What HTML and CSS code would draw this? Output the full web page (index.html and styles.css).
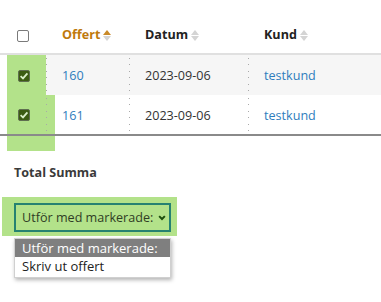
FILE: index.html
```html
<!DOCTYPE html>
<html lang="sv">
<head>
<meta charset="utf-8">
<title>Offerter</title>
<link rel="stylesheet" href="styles.css">
</head>
<body>
<div class="page">
  <div class="table-wrap">
    <div class="col-highlight"></div>
    <table class="grid">
      <thead>
        <tr>
          <th class="c-check"><span class="cb"></span></th>
          <th class="c-offert sorted">Offert<span class="sort up"><i></i><b></b></span></th>
          <th class="c-datum">Datum<span class="sort"><i></i><b></b></span></th>
          <th class="c-kund">Kund<span class="sort"><i></i><b></b></span></th>
        </tr>
      </thead>
      <tbody>
        <tr class="odd">
          <td class="c-check"><span class="cb checked"><svg viewBox="0 0 12 12" width="12" height="12"><path d="M2.6 6.2 L5 8.4 L9.4 3.4" fill="none" stroke="#d9eec7" stroke-width="1.8"/></svg></span></td>
          <td class="dot"><a class="lnk">160</a></td>
          <td class="dot">2023-09-06</td>
          <td class="dot"><a class="lnk">testkund</a></td>
        </tr>
        <tr>
          <td class="c-check"><span class="cb checked"><svg viewBox="0 0 12 12" width="12" height="12"><path d="M2.6 6.2 L5 8.4 L9.4 3.4" fill="none" stroke="#d9eec7" stroke-width="1.8"/></svg></span></td>
          <td class="dot"><a class="lnk">161</a></td>
          <td class="dot">2023-09-06</td>
          <td class="dot"><a class="lnk">testkund</a></td>
        </tr>
      </tbody>
    </table>
  </div>
  <div class="total">Total Summa</div>
  <div class="action-wrap">
    <div class="action">
      <div class="select">
        <span>Utför med markerade:</span>
        <svg class="chev" viewBox="0 0 10 8" width="8" height="6"><path d="M1.2 1.5 L5 5.4 L8.8 1.5" fill="none" stroke="#1d4d0c" stroke-width="2.6"/></svg>
      </div>
    </div>
    <div class="dropdown">
      <div class="opt active">Utför med markerade:</div>
      <div class="opt">Skriv ut offert</div>
    </div>
  </div>
</div>
</body>
</html>
```
FILE: styles.css
```css
* { box-sizing: border-box; }
html, body {
  margin: 0;
  padding: 0;
  background: #fff;
}
body {
  font-family: "Open Sans", "DejaVu Sans", sans-serif;
  font-size: 12.6px;
  color: #333;
}
.page {
  width: 381px;
  min-height: 302px;
}
.table-wrap {
  position: relative;
  z-index: 0;
}
.col-highlight {
  position: absolute;
  left: 7px;
  top: 54px;
  width: 48px;
  height: 97px;
  background: #b3e28a;
  z-index: -1;
}
.grid {
  width: 100%;
  border-collapse: collapse;
  table-layout: fixed;
}
.grid th {
  height: 54px;
  vertical-align: bottom;
  padding: 0 0 9px 16px;
  line-height: 18px;
  text-align: left;
  font-weight: 700;
  color: #222;
  border-bottom: 2px solid #e0e0e0;
  white-space: nowrap;
}
.grid th.c-check {
  padding-left: 0;
  padding-bottom: 11px;
}
.grid th.sorted {
  color: #bf7a0c;
}
.c-check { width: 46px; }
.c-offert { width: 83px; }
.c-datum { width: 119px; }
.grid td {
  padding: 2px 0 0 16px;
  line-height: 18px;
  vertical-align: middle;
  white-space: nowrap;
}
.grid tbody tr { height: 41px; }
.grid tbody tr:last-child { height: 40px; }
.grid tbody tr:last-child td { border-bottom: 2px solid #8a8a8a; }
.grid tbody tr.odd td:not(.c-check) { background-color: #f6f6f6; }
.grid td.c-check {
  padding: 0;
  text-align: center;
}
.grid td.dot {
  background-image: repeating-linear-gradient(to bottom, transparent 0 3px, #a9a9a9 3px 4px, transparent 4px 6.5px);
  background-size: 1px 100%;
  background-repeat: no-repeat;
  background-position: 0 0;
}
.cb {
  display: block;
  width: 12px;
  height: 12px;
  margin: 0 auto;
  border: 1px solid #7a7a7a;
  border-radius: 2px;
  background: #fff;
}
.grid td .cb {
  display: inline-block;
  vertical-align: middle;
  margin-left: 2px;
}
.cb.checked {
  background: #3c5c12;
  border-color: #5f6e50;
}
.cb.checked svg {
  display: block;
  margin: -1px 0 0 -1px;
}
.lnk {
  color: #2f7dbd;
  text-decoration: none;
}
.sort {
  display: inline-flex;
  flex-direction: column;
  gap: 1px;
  margin-left: 3px;
  vertical-align: middle;
}
.sort i, .sort b {
  display: block;
  width: 0;
  height: 0;
  border-left: 4px solid transparent;
  border-right: 4px solid transparent;
}
.sort i { border-bottom: 5px solid #d4d4d4; }
.sort b { border-top: 5px solid #d4d4d4; }
.sort.up i { border-bottom-color: #c98a2a; }
.total {
  padding: 28px 0 0 14px;
  font-weight: 700;
  color: #3a3a3a;
  line-height: 18px;
}
.action-wrap {
  margin: 15px 0 0 2px;
}
.action {
  display: inline-block;
  padding: 6px 6px 4px 12px;
  background: #b3e28a;
}
.select {
  width: 157px;
  height: 29px;
  display: flex;
  align-items: center;
  justify-content: space-between;
  padding: 0 3px 0 6px;
  border: 2px solid #268271;
  color: #2f3d25;
  white-space: nowrap;
}
.chev { display: block; }
.dropdown {
  width: 157px;
  margin: 2px 0 0 12px;
  background: #fff;
  border: 1px solid #d0d0d0;
  box-shadow: 1px 2px 4px rgba(0,0,0,0.3);
  padding-bottom: 1px;
  font-size: 13px;
}
.opt {
  padding: 0 7px;
  line-height: 18px;
  height: 18px;
  color: #222;
  white-space: nowrap;
}
.opt.active {
  background: #7f7f7f;
  color: #fff;
}
.opt + .opt { height: 19px; line-height: 19px; }
```
